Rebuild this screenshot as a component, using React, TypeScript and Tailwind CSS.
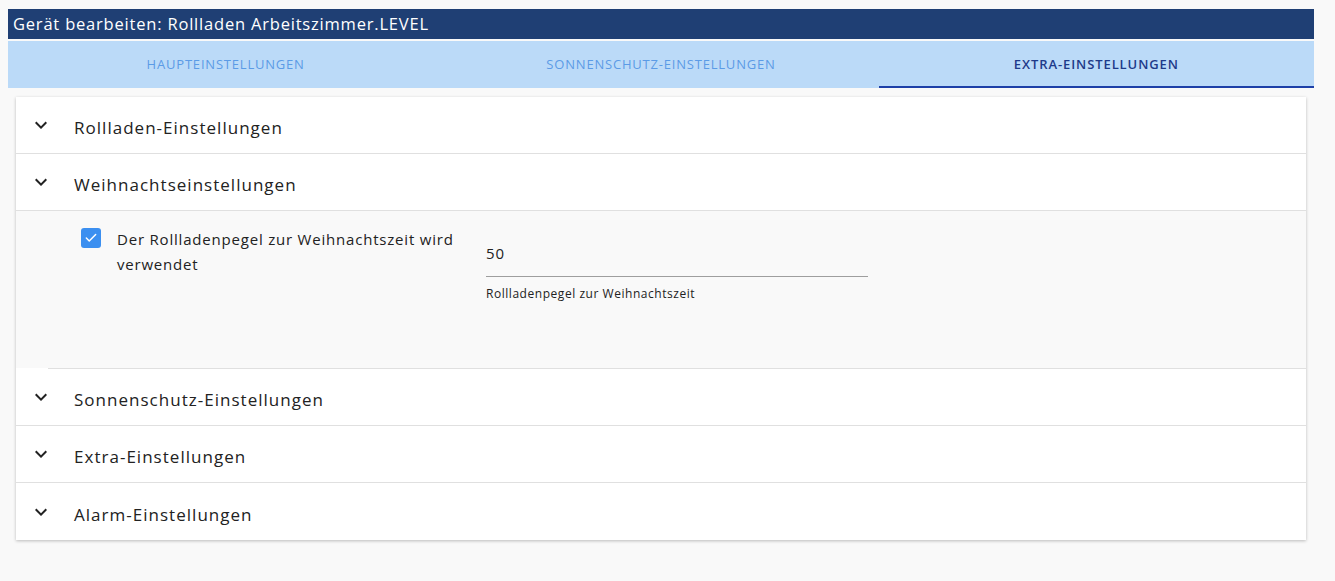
import { Check } from 'lucide-react';

const font = { fontFamily: '"Open Sans", "DejaVu Sans", sans-serif' };

function Chevron() {
  return (
    <svg viewBox="0 0 24 24" className="w-6 h-6 text-[#222]" fill="currentColor">
      <path d="M16.59 8.59 12 13.17 7.41 8.59 6 10l6 6 6-6z" />
    </svg>
  );
}

function Row({ title, last }: { title: string; last?: boolean }) {
  return (
    <div className={`h-[57px] flex items-center pl-[13px] ${last ? '' : 'border-b border-[#e0e0e0]'}`}>
      <Chevron />
      <span className="ml-[21px] text-[17px] tracking-[0.06em] text-[#222] pt-[6px]">{title}</span>
    </div>
  );
}

export default function App() {
  const tabs = ['Haupteinstellungen', 'Sonnenschutz-Einstellungen', 'Extra-Einstellungen'];
  return (
    <div className="min-h-screen bg-[#f9f9f9] pt-[9px] tracking-[0.05em]" style={font}>
      <div className="ml-2 w-[1306px]">
        <div className="h-[30px] bg-[#1f3f74] text-white text-[16.5px] flex items-center pl-[5px]">
          Gerät bearbeiten: Rollladen Arbeitszimmer.LEVEL
        </div>
        <div className="mt-[2px] h-[47px] bg-[#bbdaf8] grid grid-cols-3">
          {tabs.map((t, i) => (
            <div
              key={t}
              className={`flex items-center justify-center uppercase text-[13px] ${
                i === 2
                  ? 'text-[#1e3a8a] font-semibold tracking-[0.07em] border-b-2 border-[#1e40a8] pt-[2px]'
                  : 'text-[#5b9be6]'
              }`}
            >
              {t}
            </div>
          ))}
        </div>

        <div className="mx-2 mt-[9px] bg-white shadow-[0_1px_3px_rgba(0,0,0,0.25)]">
          <Row title="Rollladen-Einstellungen" />
          <Row title="Weihnachtseinstellungen" />
          <div className="bg-[#f9f9f9] h-[157px] flex pt-[17px]">
            <div className="flex w-[470px] pl-[65px]">
              <div className="w-5 h-5 rounded-[3px] bg-[#3b8ff0] flex items-center justify-center shrink-0">
                <Check className="w-[14px] h-[14px] text-white" strokeWidth={2.5} />
              </div>
              <div className="ml-4 text-[15px] leading-[25px] text-[#222] w-[350px] -mt-[1px]">
                Der Rollladenpegel zur Weihnachtszeit wird verwendet
              </div>
            </div>
            <div className="w-[382px] pt-[14px]">
              <div className="text-[15px] text-[#222] pb-[11px] border-b border-[#9e9e9e]">50</div>
              <div className="text-[12px] tracking-[0.045em] text-[#222] mt-[8px]">Rollladenpegel zur Weihnachtszeit</div>
            </div>
          </div>
          <div className="border-t border-[#e0e0e0] ml-8" />
          <Row title="Sonnenschutz-Einstellungen" />
          <Row title="Extra-Einstellungen" />
          <Row title="Alarm-Einstellungen" last />
        </div>
      </div>
    </div>
  );
}
